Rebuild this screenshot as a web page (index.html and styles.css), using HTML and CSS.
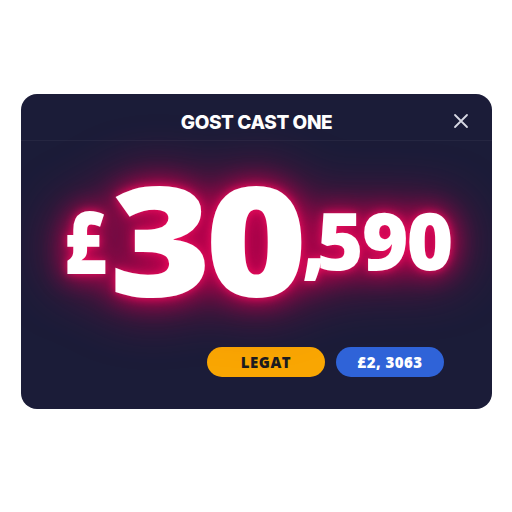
FILE: index.html
```html
<!DOCTYPE html>
<html>
    <head>
        <link rel="stylesheet" href="styles.css">
        <title>Gost Cast One</title>
    </head>
    <body>
        <div class="prizeCard">
            <div class="cardHeader">
                <span class="cardTitle">GOST CAST ONE</span>
                <svg class="closeButton" width="16" height="16" viewBox="0 0 16 16">
                    <path d="M2 2 L14 14 M14 2 L2 14" stroke="#d8d9e4" stroke-width="1.8" stroke-linecap="round" fill="none" />
                </svg>
            </div>

            <div class="amountBlock">
                <span class="amountPound">£</span>
                <span class="amountBig">30</span>
                <span class="amountSmall amountComma">,</span>
                <span class="amountSmall">590</span>
            </div>

            <div class="buttonRow">
                <span class="pillButton legatButton">LEGAT</span>
                <span class="pillButton balanceButton">£2, 3063</span>
            </div>
        </div>
    </body>
</html>
```

FILE: styles.css
```css
body {
    margin: 0;
    padding: 94px 20px 0 21px;
    background: white;
    font-family: "Open Sans", "DejaVu Sans", sans-serif;
}
.prizeCard {
    width: 471px;
    height: 315px;
    background: #1b1c38;
    border-radius: 16px;
    overflow: hidden;
    display: flex;
    flex-direction: column;
}
.cardHeader {
    height: 46px;
    border-bottom: 1px solid #252641;
    display: flex;
    align-items: center;
    justify-content: center;
    position: relative;
}
.cardTitle {
    color: white;
    font-family: "Inter", sans-serif;
    font-weight: 800;
    font-size: 19px;
    letter-spacing: -0.4px;
    padding-top: 10px;
}
.closeButton {
    position: absolute;
    right: 23px;
    top: 19px;
}
/* glow goes on the whole row so no digit's halo covers its neighbour */
.amountBlock {
    height: 196px;
    display: flex;
    align-items: center;
    justify-content: center;
    color: white;
    font-weight: 800;
    padding: 0 8px 0 6px;
    filter:
        drop-shadow(0 0 4px #f0105f)
        drop-shadow(0 0 12px #d00052)
        drop-shadow(0 0 26px #a00046);
}
.amountBig {
    display: inline-block;
    font-size: 152px;
    letter-spacing: -6px;
    line-height: 1;
    transform: scaleX(1.15);
    margin: 0 16px 0 16px;
}
.amountPound {
    display: inline-block;
    font-size: 86px;
    line-height: 1;
    transform: scaleX(0.85);
    margin-right: -4px;
    padding-top: 4px;
}
.amountSmall {
    font-size: 80px;
    letter-spacing: -2px;
    line-height: 1;
}
.amountComma {
    margin: 0 -8px 0 -2px;
}
.buttonRow {
    display: flex;
    justify-content: flex-end;
    gap: 11px;
    padding: 10px 48px 0 0;
}
.pillButton {
    height: 30px;
    border-radius: 15px;
    display: flex;
    align-items: center;
    justify-content: center;
    font-weight: 800;
    font-size: 15px;
    letter-spacing: 0.5px;
}
.legatButton {
    width: 118px;
    background: #f9a602;
    color: #1b1c20;
}
.balanceButton {
    width: 108px;
    background: #2f63d8;
    color: white;
}
```
